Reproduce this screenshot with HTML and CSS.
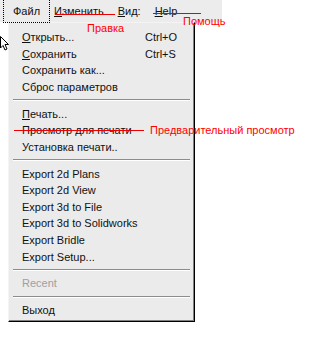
FILE: index.html
```html
<!DOCTYPE html>
<html>
<head>
<meta charset="utf-8">
<link rel="stylesheet" href="styles.css">
</head>
<body>
<div class="screen">
  <div class="menubar">
    <span class="top-item active">Файл</span>
    <span class="top-item"><u>И</u>зменить</span>
    <span class="top-item"><u>В</u>ид:</span>
    <span class="top-item"><u>H</u>elp</span>
  </div>
  <div class="menu">
    <div class="row"><span><u>О</u>ткрыть...</span><span class="key">Ctrl+O</span></div>
    <div class="row"><span><u>С</u>охранить</span><span class="key">Ctrl+S</span></div>
    <div class="row"><span>Сохранить как...</span></div>
    <div class="row"><span>Сброс параметров</span></div>
    <div class="sep"></div>
    <div class="row"><span><u>П</u>ечать...</span></div>
    <div class="row"><span>Просмотр для печати</span></div>
    <div class="row"><span>Установка печати..</span></div>
    <div class="sep"></div>
    <div class="row"><span>Export 2d Plans</span></div>
    <div class="row"><span>Export 2d View</span></div>
    <div class="row"><span>Export 3d to File</span></div>
    <div class="row"><span>Export 3d to Solidworks</span></div>
    <div class="row"><span>Export Bridle</span></div>
    <div class="row"><span>Export Setup...</span></div>
    <div class="sep"></div>
    <div class="row disabled"><span>Recent</span></div>
    <div class="sep"></div>
    <div class="row"><span>Выход</span></div>
  </div>

  <div class="strike s-edit"></div>
  <div class="strike s-help"></div>
  <div class="strike s-preview"></div>
  <div class="note n-edit">Правка</div>
  <div class="note n-help">Помощь</div>
  <div class="note n-preview">Предварительный просмотр</div>
  <svg class="cursor" width="10" height="16" viewBox="0 0 10 16"><path d="M0.5 0.5 L0.5 12 L3 9.5 L5 14 L7 13 L5 8.5 L8.5 8.5 Z" fill="#fff" stroke="#000" stroke-width="1"/></svg>
</div>
</body>
</html>
```

FILE: styles.css
```css
html, body {
  margin: 0;
  padding: 0;
  background: #fff;
}
.screen {
  position: relative;
  width: 320px;
  height: 346px;
  font-family: "Liberation Sans", Arial, sans-serif;
  font-size: 11px;
  color: #111;
}
.menubar {
  display: flex;
  align-items: center;
  height: 22px;
  width: 222px;
  background: #ececec;
  box-sizing: border-box;
}
.top-item {
  padding: 0 7px;
  line-height: 18px;
}
.top-item:first-child {
  margin-left: 6px;
}
.top-item.active {
  outline: 1px dotted #000;
  outline-offset: 2px;
}
.menu {
  margin-left: 8px;
  width: 187px;
  box-sizing: border-box;
  background: #ebebeb;
  border-top: 1px solid #f4f4f4;
  border-left: 1px solid #f4f4f4;
  border-right: 1px solid #000;
  border-bottom: 1px solid #000;
  box-shadow: inset -1px -1px 0 #808080;
  padding: 6px 3px 2px 3px;
}
.row {
  display: flex;
  justify-content: space-between;
  height: 16.6px;
  line-height: 16.6px;
  padding-left: 10px;
  padding-right: 16px;
}
.key {
  width: 30px;
}
.row.disabled {
  color: #a0a0a0;
}
.sep {
  height: 0;
  border-top: 1px solid #8c8c8c;
  border-bottom: 1px solid #fff;
  margin: 4px 1px 4.2px 1px;
}
.strike {
  position: absolute;
  height: 1px;
  background: #e00;
}
.s-edit { left: 55px; top: 14px; width: 60px; }
.s-help { left: 153px; top: 13px; width: 48px; }
.s-preview { left: 14px; top: 130px; width: 130px; }
.note {
  position: absolute;
  color: #f00;
  font-size: 11px;
  line-height: 12px;
  white-space: nowrap;
}
.n-edit { left: 87px; top: 22px; }
.n-help { left: 183px; top: 15px; }
.n-preview { left: 150px; top: 124px; }
.cursor {
  position: absolute;
  left: 0;
  top: 36px;
}
```
